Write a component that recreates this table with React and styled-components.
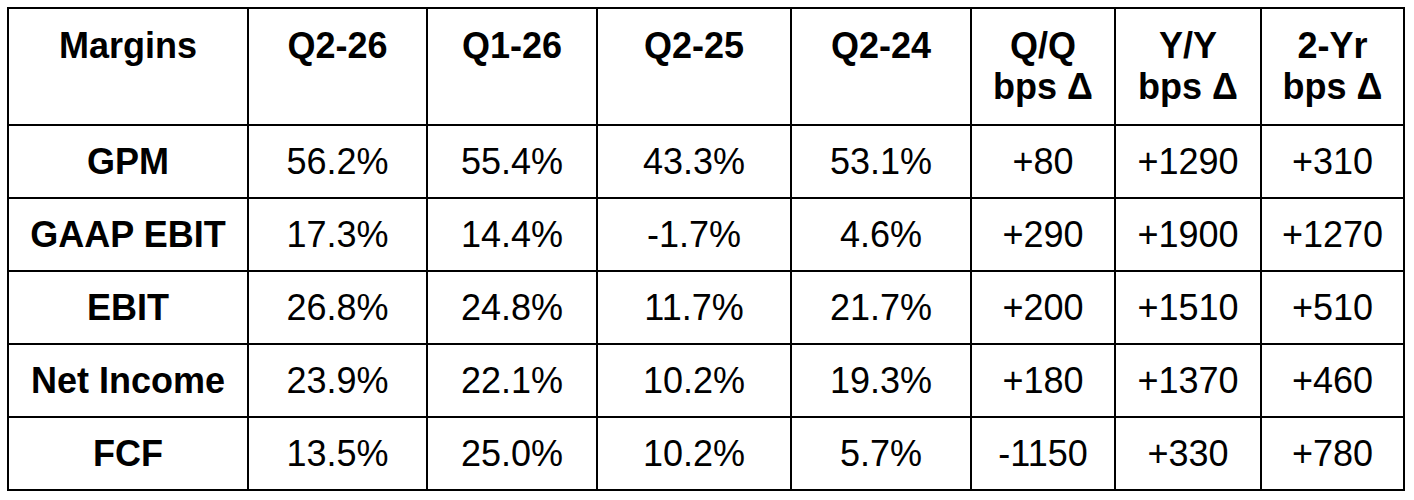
import React from "react";
import styled, { createGlobalStyle } from "styled-components";

const GlobalStyle = createGlobalStyle`
  html, body {
    margin: 0;
    padding: 0;
    background: #ffffff;
  }
  body {
    padding: 7px;
    font-family: "Liberation Sans", Arial, sans-serif;
    color: #000000;
  }
`;

const Table = styled.div`
  display: grid;
  grid-template-columns: 240px 179px 170px 194px 180px 144px 146px 143px;
  grid-template-rows: 117px repeat(5, 73px);
  width: max-content;
  border-top: 2px solid #000;
  border-left: 2px solid #000;
  box-sizing: border-box;
`;

const Cell = styled.div`
  box-sizing: border-box;
  border-right: 2px solid #000;
  border-bottom: 2px solid #000;
  padding: ${(p) => (p.$head ? "16px 4px 0" : "15px 4px 0")};
  font-size: 36px;
  line-height: 1.15;
  font-weight: ${(p) => (p.$bold ? 700 : 400)};
  text-align: center;
  white-space: nowrap;
`;

const Line = styled.span`
  display: block;
`;

const headers = [
  ["Margins"],
  ["Q2-26"],
  ["Q1-26"],
  ["Q2-25"],
  ["Q2-24"],
  ["Q/Q", "bps Δ"],
  ["Y/Y", "bps Δ"],
  ["2-Yr", "bps Δ"],
];

const rows = [
  ["GPM", "56.2%", "55.4%", "43.3%", "53.1%", "+80", "+1290", "+310"],
  ["GAAP EBIT", "17.3%", "14.4%", "-1.7%", "4.6%", "+290", "+1900", "+1270"],
  ["EBIT", "26.8%", "24.8%", "11.7%", "21.7%", "+200", "+1510", "+510"],
  ["Net Income", "23.9%", "22.1%", "10.2%", "19.3%", "+180", "+1370", "+460"],
  ["FCF", "13.5%", "25.0%", "10.2%", "5.7%", "-1150", "+330", "+780"],
];

export default function App() {
  return (
    <>
      <GlobalStyle />
      <Table>
        {headers.map((lines, i) => (
          <Cell key={`h${i}`} $head $bold>
            {lines.map((l) => (
              <Line key={l}>{l}</Line>
            ))}
          </Cell>
        ))}
        {rows.map((row, r) =>
          row.map((v, c) => (
            <Cell key={`${r}-${c}`} $bold={c === 0}>
              {v}
            </Cell>
          ))
        )}
      </Table>
    </>
  );
}
